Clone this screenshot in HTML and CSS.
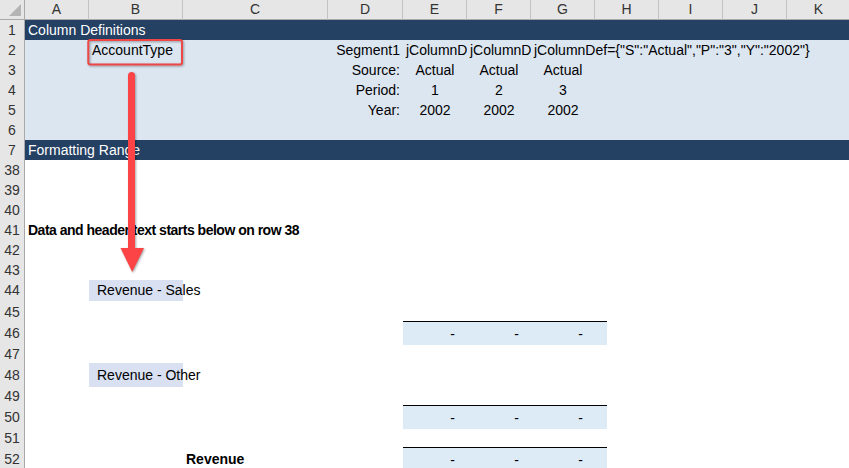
FILE: index.html
```html
<!DOCTYPE html>
<html>
<head>
<meta charset="utf-8">
<link rel="stylesheet" href="styles.css">
</head>
<body>
<div class="sheet">
  <div class="row head">
    <div class="corner"><svg width="25" height="20" viewBox="0 0 25 20"><polygon points="21,4 21,16 9,16" fill="#b4b4b4"/></svg></div>
    <div class="ch">A</div><div class="ch">B</div><div class="ch">C</div><div class="ch">D</div><div class="ch">E</div><div class="ch">F</div><div class="ch">G</div><div class="ch">H</div><div class="ch">I</div><div class="ch">J</div><div class="ch">K</div>
  </div>

  <div class="row navy"><div class="rh">1</div><div class="c">Column Definitions</div></div>
  <div class="row light"><div class="rh">2</div><div class="c"></div><div class="c">AccountType</div><div class="c"></div><div class="c r">Segment1</div><div class="c clip">jColumnD</div><div class="c clip">jColumnD</div><div class="c">jColumnDef={"S":"Actual","P":"3","Y":"2002"}</div></div>
  <div class="row light"><div class="rh">3</div><div class="c"></div><div class="c"></div><div class="c"></div><div class="c r">Source:</div><div class="c m">Actual</div><div class="c m">Actual</div><div class="c m">Actual</div></div>
  <div class="row light"><div class="rh">4</div><div class="c"></div><div class="c"></div><div class="c"></div><div class="c r">Period:</div><div class="c m">1</div><div class="c m">2</div><div class="c m">3</div></div>
  <div class="row light"><div class="rh">5</div><div class="c"></div><div class="c"></div><div class="c"></div><div class="c r">Year:</div><div class="c m">2002</div><div class="c m">2002</div><div class="c m">2002</div></div>
  <div class="row light"><div class="rh">6</div></div>
  <div class="row navy"><div class="rh">7</div><div class="c">Formatting Range</div></div>

  <div class="row"><div class="rh">38</div></div>
  <div class="row"><div class="rh">39</div></div>
  <div class="row"><div class="rh">40</div></div>
  <div class="row"><div class="rh">41</div><div class="c b tight">Data and header text starts below on row 38</div></div>
  <div class="row"><div class="rh">42</div></div>
  <div class="row"><div class="rh">43</div></div>
  <div class="row"><div class="rh">44</div><div class="c"></div><div class="c label">Revenue - Sales</div></div>
  <div class="row tall"><div class="rh">45</div></div>
  <div class="row tall"><div class="rh">46</div><div class="c"></div><div class="c"></div><div class="c"></div><div class="c"></div><div class="c band">-</div><div class="c band">-</div><div class="c band">-</div><div class="c tail"></div></div>
  <div class="row tall"><div class="rh">47</div></div>
  <div class="row tall"><div class="rh">48</div><div class="c"></div><div class="c label">Revenue - Other</div></div>
  <div class="row tall"><div class="rh">49</div></div>
  <div class="row tall"><div class="rh">50</div><div class="c"></div><div class="c"></div><div class="c"></div><div class="c"></div><div class="c band">-</div><div class="c band">-</div><div class="c band">-</div><div class="c tail"></div></div>
  <div class="row tall"><div class="rh">51</div></div>
  <div class="row tall"><div class="rh">52</div><div class="c"></div><div class="c"></div><div class="c b">Revenue</div><div class="c"></div><div class="c band">-</div><div class="c band">-</div><div class="c band">-</div><div class="c tail"></div></div>

  <svg class="overlay" width="849" height="468" viewBox="0 0 849 468">
    <g class="shadow">
      <rect x="88.3" y="40" width="93.7" height="24.5" rx="2" fill="none" stroke="#ef4646" stroke-width="2"/>
      <line x1="131.5" y1="75.5" x2="131.5" y2="252" stroke="#fc4346" stroke-width="7" stroke-linecap="round"/>
      <polygon points="120.5,248 144,248 132.2,272" fill="#fc4346"/>
    </g>
  </svg>
</div>
</body>
</html>
```

FILE: styles.css
```css
* { box-sizing: border-box; }
html, body { margin: 0; padding: 0; background: #fff; }
body {
  width: 849px;
  height: 468px;
  overflow: hidden;
  font-family: "Liberation Sans", Arial, sans-serif;
  font-size: 14px;
  color: #000;
}
.sheet {
  position: relative;
  width: 851px;
}
.row {
  display: grid;
  grid-template-columns: 25px 64px 94px 145px 75px 64px 64px 64px 64px 64px 64px 64px;
  height: 20px;
  line-height: 20px;
}
.row.tall { height: 21px; line-height: 21px; }
.row.tall .c, .row.tall .rh { padding-top: 2px; }
.row.head { height: 20px; line-height: 19px; }
.corner {
  background: #e6e6e6;
  border-right: 1px solid #a9a9a9;
  border-bottom: 1px solid #a9a9a9;
  height: 20px;
}
.corner svg { display: block; }
.ch {
  background: #e6e6e6;
  border-right: 1px solid #c4c4c4;
  border-bottom: 1px solid #a9a9a9;
  text-align: center;
  color: #333;
}
.rh {
  background: #e6e6e6;
  border-right: 1px solid #a9a9a9;
  border-bottom: 1px solid #c4c4c4;
  text-align: center;
  color: #333;
}
.navy { background: #244062; color: #fff; }
.light { background: #dce6f1; }
.c {
  padding: 0 3px;
  white-space: nowrap;
  overflow: visible;
  min-width: 0;
}
.c.clip { overflow: hidden; padding-right: 0; }
.c.r { text-align: right; padding-right: 3px; }
.c.m { text-align: center; }
.c.b { font-weight: bold; }
.c.tight { letter-spacing: -0.5px; }
.c.label {
  background: #d9e0f2;
  padding-left: 8px;
}
.c.band {
  background: #ddebf7;
  border-top: 1px solid #000;
  text-align: right;
  padding-right: 12px;
}
.c.tail {
  background:
    linear-gradient(#000, #000) left top / 12px 1px no-repeat,
    linear-gradient(#ddebf7, #ddebf7) left top / 12px 100% no-repeat;
}
.overlay {
  position: absolute;
  left: 0;
  top: 0;
  pointer-events: none;
}
.shadow { filter: drop-shadow(1px 1px 1px rgba(0, 0, 0, 0.35)); }
```
